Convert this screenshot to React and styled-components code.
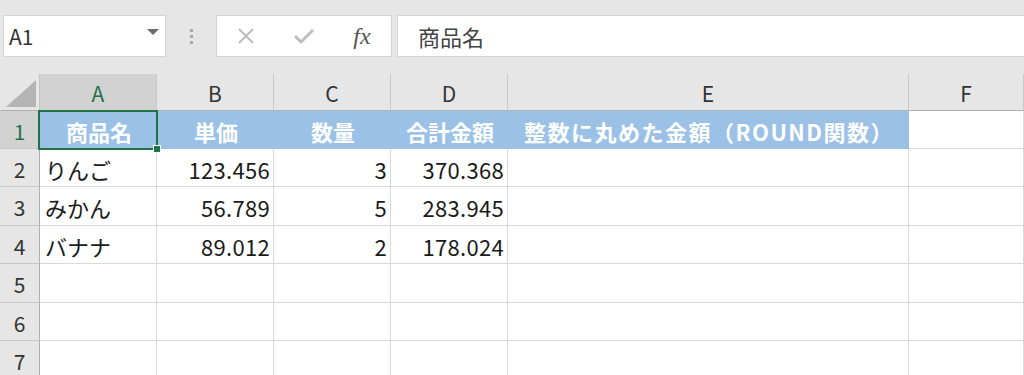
import React from "react";
import styled, { createGlobalStyle } from "styled-components";

const Global = createGlobalStyle`
  html, body { margin: 0; padding: 0; background: #e6e6e6; }
  body { font-family: "Noto Sans CJK JP", "Noto Sans", sans-serif; overflow: hidden; }
`;

const Page = styled.div`
  width: 1024px;
  height: 375px;
  overflow: hidden;
  background: #e6e6e6;
`;

const Toolbar = styled.div`
  height: 74px;
  display: flex;
  align-items: flex-start;
  padding: 15px 0 0 3px;
  box-sizing: border-box;
`;

const NameBox = styled.div`
  width: 163px;
  height: 42px;
  box-sizing: border-box;
  background: #fff;
  border: 1px solid #d4d4d4;
  display: flex;
  align-items: center;
  justify-content: space-between;
  padding: 0 6px 0 5px;
  font-size: 21px;
  color: #333;
`;

const Caret = styled.span`
  width: 0;
  height: 0;
  border-left: 6px solid transparent;
  border-right: 6px solid transparent;
  border-top: 6px solid #6a6a6a;
  margin-top: -8px;
`;

const Grip = styled.div`
  width: 50px;
  height: 42px;
  display: flex;
  flex-direction: column;
  align-items: center;
  justify-content: center;
  gap: 3px;
  span {
    width: 3px;
    height: 3px;
    background: #a6a6a6;
  }
`;

const ButtonBox = styled.div`
  width: 176px;
  height: 42px;
  box-sizing: border-box;
  background: #fff;
  border: 1px solid #d4d4d4;
  display: flex;
  align-items: center;
`;

const ToolButton = styled.div`
  width: 58px;
  height: 40px;
  display: flex;
  align-items: center;
  justify-content: center;
  color: ${(p) => p.$color || "#bdbdbd"};
  font-family: "Liberation Serif", serif;
  font-style: italic;
  font-size: 24px;
`;

const FormulaBox = styled.div`
  flex: 1;
  margin-left: 5px;
  height: 42px;
  box-sizing: border-box;
  background: #fff;
  border: 1px solid #d4d4d4;
  border-right: none;
  display: flex;
  align-items: center;
  padding-left: 20px;
  font-size: 22px;
  color: #444;
`;

const Grid = styled.div`
  display: grid;
  grid-template-columns: 40px 117px 117px 117px 117px 401px 1fr;
  grid-template-rows: 37px 38px 38px 39px 38px 39px 38px 39px;
  background: #fff;
`;

const Corner = styled.div`
  background: #e6e6e6;
  border-right: 1px solid #c4c4c4;
  border-bottom: 1px solid #b0b0b0;
  display: flex;
  align-items: flex-end;
  justify-content: flex-end;
  padding: 0 3px 3px 0;
  box-sizing: border-box;
`;

const ColHead = styled.div`
  background: ${(p) => (p.$sel ? "#d2d2d2" : "#e6e6e6")};
  color: ${(p) => (p.$sel ? "#217346" : "#333")};
  border-right: 1px solid #c8c8c8;
  border-bottom: 1px solid #b0b0b0;
  box-sizing: border-box;
  display: flex;
  align-items: center;
  justify-content: center;
  font-size: 21px;
  padding-top: 2px;
`;

const RowHead = styled.div`
  background: ${(p) => (p.$sel ? "#d2d2d2" : "#e6e6e6")};
  color: ${(p) => (p.$sel ? "#217346" : "#333")};
  border-right: 1px solid #b0b0b0;
  border-bottom: 1px solid #c8c8c8;
  box-sizing: border-box;
  display: flex;
  align-items: center;
  justify-content: center;
  font-size: 21px;
  padding-top: 2px;
`;

const Cell = styled.div`
  position: relative;
  background: ${(p) => (p.$fill ? "#9bc2e6" : "#fff")};
  color: ${(p) => (p.$fill ? "#fff" : "#1a1a1a")};
  font-weight: ${(p) => (p.$fill ? 700 : 400)};
  border-right: 1px solid ${(p) => (p.$fill ? "#9bc2e6" : "#d9d9d9")};
  border-bottom: 1px solid ${(p) => (p.$fill ? "#9bc2e6" : "#d9d9d9")};
  box-sizing: border-box;
  display: flex;
  align-items: center;
  justify-content: ${(p) =>
    p.$align === "right" ? "flex-end" : p.$align === "center" ? "center" : "flex-start"};
  padding: 2px 3px 0 5px;
  font-size: 22px;
  letter-spacing: ${(p) => (p.$wide ? "1.5px" : p.$align === "right" ? "0.3px" : "0")};
  white-space: nowrap;
  overflow: visible;
`;

const Selection = styled.div`
  position: absolute;
  z-index: 3;
  left: -2px;
  top: -1px;
  right: -2px;
  bottom: -2px;
  border: 2px solid #217346;
  pointer-events: none;
  &::after {
    content: "";
    position: absolute;
    right: -5px;
    bottom: -5px;
    width: 6px;
    height: 6px;
    background: #217346;
    border: 1px solid #fff;
  }
`;

const cols = ["A", "B", "C", "D", "E", "F"];

const header = ["商品名", "単価", "数量", "合計金額", "整数に丸めた金額（ROUND関数）"];
const data = [
  ["りんご", "123.456", "3", "370.368"],
  ["みかん", "56.789", "5", "283.945"],
  ["バナナ", "89.012", "2", "178.024"],
];

export default function App() {
  return (
    <Page>
      <Global />
      <Toolbar>
        <NameBox>
          A1
          <Caret />
        </NameBox>
        <Grip>
          <span />
          <span />
          <span />
        </Grip>
        <ButtonBox>
          <ToolButton>
            <svg width="20" height="20" viewBox="0 0 20 20">
              <path d="M3 3 L17 17 M17 3 L3 17" stroke="#bdbdbd" strokeWidth="2" fill="none" />
            </svg>
          </ToolButton>
          <ToolButton>
            <svg width="22" height="20" viewBox="0 0 22 20">
              <path d="M2 10 L8 16 L20 4" stroke="#bdbdbd" strokeWidth="3" fill="none" />
            </svg>
          </ToolButton>
          <ToolButton $color="#555">
            <span>fx</span>
          </ToolButton>
        </ButtonBox>
        <FormulaBox>商品名</FormulaBox>
      </Toolbar>
      <Grid>
        <Corner>
          <svg width="30" height="27" viewBox="0 0 30 27">
            <polygon points="30,0 30,27 0,27" fill="#b4b4b4" />
          </svg>
        </Corner>
        {cols.map((c) => (
          <ColHead key={c} $sel={c === "A"}>
            {c}
          </ColHead>
        ))}

        <RowHead $sel>1</RowHead>
        {header.map((h, i) => (
          <Cell key={h} $fill $align="center" $wide={i === 4}>
            {h}
            {i === 0 && <Selection />}
          </Cell>
        ))}
        <Cell />

        {data.map((row, r) => (
          <React.Fragment key={r}>
            <RowHead>{r + 2}</RowHead>
            <Cell>{row[0]}</Cell>
            <Cell $align="right">{row[1]}</Cell>
            <Cell $align="right">{row[2]}</Cell>
            <Cell $align="right">{row[3]}</Cell>
            <Cell />
            <Cell />
          </React.Fragment>
        ))}

        {[5, 6, 7].map((n) => (
          <React.Fragment key={n}>
            <RowHead>{n}</RowHead>
            <Cell />
            <Cell />
            <Cell />
            <Cell />
            <Cell />
            <Cell />
          </React.Fragment>
        ))}
      </Grid>
    </Page>
  );
}
